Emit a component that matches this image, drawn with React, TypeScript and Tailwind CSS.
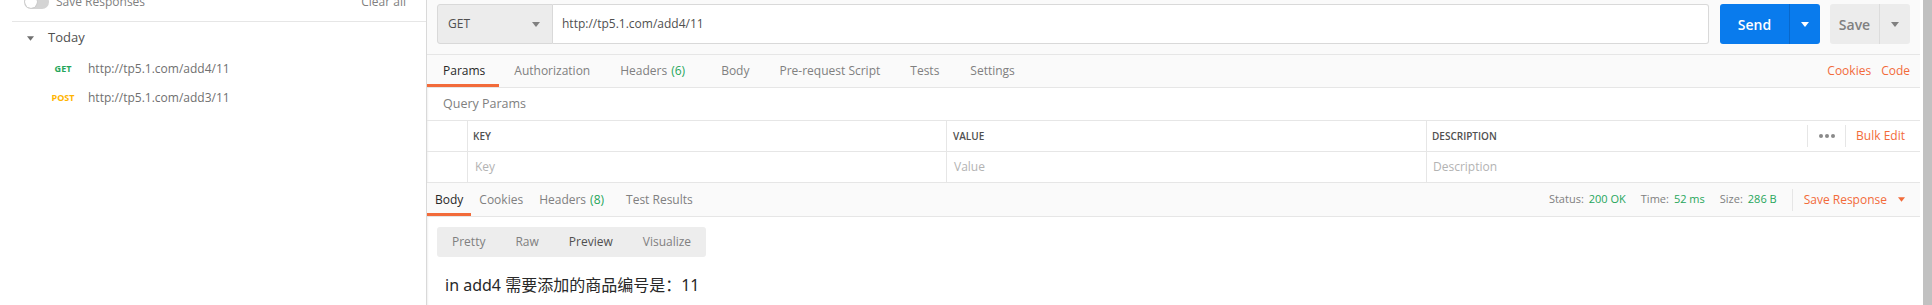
import React from "react";

const Caret = ({ color = "#808080", w = 8, h = 5 }: { color?: string; w?: number; h?: number }) => (
  <svg width={w} height={h} viewBox="0 0 8 5" className="block">
    <polygon points="0,0 8,0 4,5" fill={color} />
  </svg>
);

export default function App() {
  const font = { fontFamily: '"Open Sans", "Noto Sans", sans-serif' };
  return (
    <div
      className="w-[1932px] h-[305px] flex overflow-hidden bg-white text-[#505050]"
      style={font}
    >
      {/* Sidebar */}
      <div className="w-[427px] shrink-0 border-r border-[#d9d9d9] flex flex-col">
        <div className="ml-[12px] mt-[-17px] h-[39px] border-b border-[#e6e6e6] flex items-center pl-[12px] pr-[20px] shrink-0">
          <div className="relative w-[25px] h-[14px] rounded-full bg-[#d4d4d4] flex items-center">
            <div className="ml-[1px] w-[12px] h-[12px] rounded-full bg-white shadow-[0_0_1px_rgba(0,0,0,0.3)]" />
          </div>
          <span className="ml-[7px] text-[12px] text-[#808080]">Save Responses</span>
          <span className="ml-auto text-[12px] text-[#808080]">Clear all</span>
        </div>
        <div className="h-[32px] flex items-center pl-[27px] shrink-0">
          <Caret color="#707070" w={7} h={5} />
          <span className="ml-[14px] text-[13px] text-[#505050]">Today</span>
        </div>
        <div className="h-[29px] flex items-center shrink-0">
          <span className="ml-[45px] w-[36px] text-center text-[9px] font-bold text-[#26a65b]">GET</span>
          <span className="ml-[7px] text-[12px] text-[#707070]">http://tp5.1.com/add4/11</span>
        </div>
        <div className="h-[29px] flex items-center shrink-0">
          <span className="ml-[45px] w-[36px] text-center text-[9px] font-bold text-[#ffb400]">POST</span>
          <span className="ml-[7px] text-[12px] text-[#707070]">http://tp5.1.com/add3/11</span>
        </div>
      </div>

      {/* Main */}
      <div className="flex-1 flex flex-col min-w-0 shadow-[inset_2px_0_2px_-1px_rgba(0,0,0,0.06)]">
        {/* Request bar */}
        <div className="h-[55px] shrink-0 bg-[#fafafa] border-b border-[#e6e6e6] pt-[4px] px-[10px]">
          <div className="h-[40px] flex">
            <div className="w-[116px] h-full bg-[#ececec] border border-[#d9d9d9] rounded-l-[3px] flex items-center pl-[10px] pr-[12px]">
              <span className="text-[12px] text-[#505050]">GET</span>
              <span className="ml-auto"><Caret color="#808080" /></span>
            </div>
            <div className="flex-1 h-full bg-white border border-l-0 border-[#d9d9d9] rounded-r-[3px] flex items-center pl-[9px]">
              <span className="text-[12px] text-[#505050]">http://tp5.1.com/add4/11</span>
            </div>
            <div className="ml-[11px] w-[100px] h-full rounded-[3px] bg-[#097bed] flex">
              <div className="w-[69px] h-full flex items-center justify-center text-[14px] font-semibold text-white">
                Send
              </div>
              <div className="w-[1px] h-full bg-[#0868cc]" />
              <div className="flex-1 flex items-center justify-center">
                <Caret color="#ffffff" />
              </div>
            </div>
            <div className="ml-[10px] w-[80px] h-full rounded-[3px] bg-[#ececec] flex">
              <div className="w-[49px] h-full flex items-center justify-center text-[14px] font-semibold text-[#808080]">
                Save
              </div>
              <div className="w-[1px] h-full bg-[#dcdcdc]" />
              <div className="flex-1 flex items-center justify-center">
                <Caret color="#808080" />
              </div>
            </div>
          </div>
        </div>

        {/* Request tabs */}
        <div className="h-[33px] shrink-0 bg-[#fafafa] border-b border-[#e6e6e6] flex items-stretch text-[12px]">
          <div className="pl-[16px] pr-[14px] pt-[3px] border-b-[3px] border-[#f26b3a] flex items-center text-[#282828]">Params</div>
          <div className="px-[15px] pt-[3px] border-b-[3px] border-transparent flex items-center text-[#808080]">Authorization</div>
          <div className="px-[15px] pt-[3px] border-b-[3px] border-transparent flex items-center text-[#808080]">
            Headers <span className="ml-[4px] text-[#26a65b]">(6)</span>
            <span className="w-[6px]" />
          </div>
          <div className="px-[15px] pt-[3px] border-b-[3px] border-transparent flex items-center text-[#808080]">Body</div>
          <div className="px-[15px] pt-[3px] border-b-[3px] border-transparent flex items-center text-[#808080]">Pre-request Script</div>
          <div className="px-[15px] pt-[3px] border-b-[3px] border-transparent flex items-center text-[#808080]">Tests</div>
          <div className="px-[16px] pt-[3px] border-b-[3px] border-transparent flex items-center text-[#808080]">Settings</div>
          <div className="ml-auto pr-[10px] pt-[3px] border-b-[3px] border-transparent flex items-center gap-[10px] text-[#f26b3a]">
            <span>Cookies</span>
            <span>Code</span>
          </div>
        </div>

        {/* Query params title */}
        <div className="h-[32px] shrink-0 flex items-center pl-[16px] text-[12.5px] text-[#808080]">Query Params</div>

        {/* Table header */}
        <div className="h-[32px] shrink-0 border-y border-[#e6e6e6] flex text-[10px] font-semibold text-[#505050]">
          <div className="w-[41px] border-r border-[#e6e6e6]" />
          <div className="w-[479px] border-r border-[#e6e6e6] flex items-center pl-[5px]">KEY</div>
          <div className="w-[480px] border-r border-[#e6e6e6] flex items-center pl-[6px]">VALUE</div>
          <div className="flex-1 flex items-center pl-[5px] pr-[15px]">
            <span>DESCRIPTION</span>
            <div className="ml-auto h-[22px] w-[1px] bg-[#e6e6e6]" />
            <div className="w-[37px] flex items-center justify-center gap-[2px]">
              <span className="w-[4px] h-[4px] rounded-full bg-[#8a8a8a]" />
              <span className="w-[4px] h-[4px] rounded-full bg-[#8a8a8a]" />
              <span className="w-[4px] h-[4px] rounded-full bg-[#8a8a8a]" />
            </div>
            <div className="h-[22px] w-[1px] bg-[#e6e6e6]" />
            <span className="ml-[10px] text-[12px] font-normal text-[#f26b3a]">Bulk Edit</span>
          </div>
        </div>

        {/* Table body row */}
        <div className="h-[30px] shrink-0 flex text-[12px] text-[#b3b3b3]">
          <div className="w-[41px] border-r border-[#e6e6e6]" />
          <div className="w-[479px] border-r border-[#e6e6e6] flex items-center pl-[7px]">Key</div>
          <div className="w-[480px] border-r border-[#e6e6e6] flex items-center pl-[7px]">Value</div>
          <div className="flex-1 flex items-center pl-[6px]">Description</div>
        </div>

        {/* Response tabs */}
        <div className="h-[35px] shrink-0 bg-[#fafafa] border-y border-[#e6e6e6] flex items-stretch text-[12px]">
          <div className="px-[8px] pt-[3px] border-b-[3px] border-[#f26b3a] flex items-center text-[#282828]">Body</div>
          <div className="px-[8px] pt-[3px] border-b-[3px] border-transparent flex items-center text-[#808080]">Cookies</div>
          <div className="px-[8px] pt-[3px] border-b-[3px] border-transparent flex items-center text-[#808080]">
            Headers <span className="ml-[4px] text-[#26a65b]">(8)</span>
            <span className="w-[6px]" />
          </div>
          <div className="px-[8px] pt-[3px] border-b-[3px] border-transparent flex items-center text-[#808080]">Test Results</div>
          <div className="ml-auto pr-[15px] pt-[3px] border-b-[3px] border-transparent flex items-center text-[11px] text-[#808080]">
            <span>Status:</span>
            <span className="ml-[5px] text-[#26a65b]">200 OK</span>
            <span className="ml-[15px]">Time:</span>
            <span className="ml-[5px] text-[#26a65b]">52 ms</span>
            <span className="ml-[15px]">Size:</span>
            <span className="ml-[5px] text-[#26a65b]">286 B</span>
            <div className="ml-[15px] w-[1px] h-[22px] bg-[#e6e6e6]" />
            <span className="ml-[11px] text-[12px] text-[#f26b3a]">Save Response</span>
            <span className="ml-[11px]"><Caret color="#f26b3a" w={7} h={5} /></span>
          </div>
        </div>

        {/* Pretty / Raw toggle */}
        <div className="mt-[10px] ml-[10px] self-start h-[30px] bg-[#ededed] rounded-[3px] flex items-center text-[12px] shrink-0">
          <span className="px-[15px] text-[#808080]">Pretty</span>
          <span className="px-[15px] text-[#808080]">Raw</span>
          <span className="px-[15px] text-[#505050]">Preview</span>
          <span className="px-[15px] text-[#808080]">Visualize</span>
        </div>

        {/* Response body */}
        <div
          className="mt-[17px] pl-[18px] text-[16px] leading-[22px] text-[#282828] shrink-0"
          style={{ fontFamily: '"Noto Sans", "Noto Sans CJK SC", sans-serif' }}
        >
          in add4 需要添加的商品编号是：11
        </div>
      </div>

      {/* Scrollbar */}
      <div className="w-[3px] shrink-0 bg-white" />
      <div className="w-[9px] shrink-0 bg-[#c1c1c1]" />
    </div>
  );
}
